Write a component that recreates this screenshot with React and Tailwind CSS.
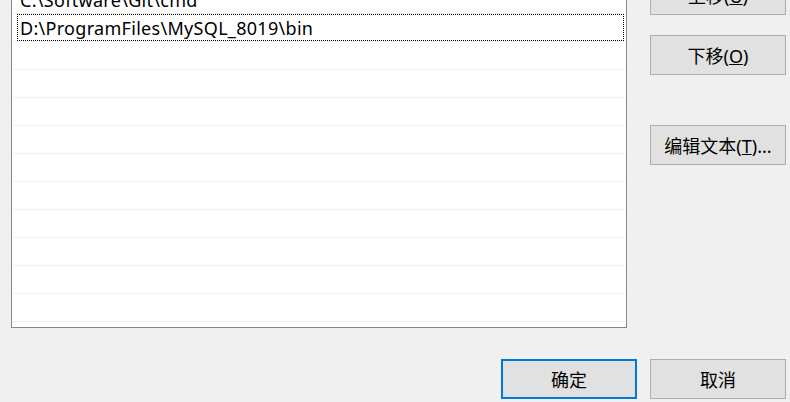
const rows = ['C:\\Software\\Git\\cmd', 'D:\\ProgramFiles\\MySQL_8019\\bin', '', '', '', '', '', '', '', '', '', '']

const font = { fontFamily: '"Noto Sans", "Noto Sans CJK SC", sans-serif' }

function Btn({ children, primary, className = '' }) {
  return (
    <button
      className={`w-[136px] h-[40px] flex items-center justify-center pt-[2px] text-[18px] leading-[24px] text-black bg-[#e1e1e1] ${
        primary ? 'border-2 border-[#0078d7]' : 'border border-[#adadad]'
      } ${className}`}
    >
      {children}
    </button>
  )
}

export default function App() {
  return (
    <div className="w-[790px] h-[402px] bg-[#f0f0f0] overflow-hidden flex flex-col" style={font}>
      <div className="flex items-start">
        {/* path list */}
        <div className="ml-[11px] mt-[-15px] w-[616px] h-[343px] border border-[#828790] bg-white">
          {rows.map((r, i) => (
            <div key={i} className="mx-[1px] h-[28px] border-b border-[#f0f0f0] flex">
              {i === 1 ? (
                <div className="ml-[4px] mr-[1px] flex-1 h-[27px] border border-dotted border-black pl-[2px] text-[18px] tracking-[0.3px] leading-[26px] text-black">
                  {r}
                </div>
              ) : (
                <div className="ml-[4px] flex-1 h-[27px] pl-[3px] text-[18px] tracking-[0.3px] leading-[28px] text-black">
                  {r}
                </div>
              )}
            </div>
          ))}
        </div>

        {/* side buttons */}
        <div className="ml-[23px] mt-[-25px] flex flex-col">
          <Btn>
            上移(<span className="underline">U</span>)
          </Btn>
          <Btn className="mt-[20px]">
            下移(<span className="underline">O</span>)
          </Btn>
          <Btn className="mt-[50px]">
            编辑文本(<span className="underline">T</span>)...
          </Btn>
        </div>
      </div>

      <div className="mt-[31px] flex justify-end gap-[13px] pr-[4px]">
        <Btn primary>确定</Btn>
        <Btn>取消</Btn>
      </div>
    </div>
  )
}
